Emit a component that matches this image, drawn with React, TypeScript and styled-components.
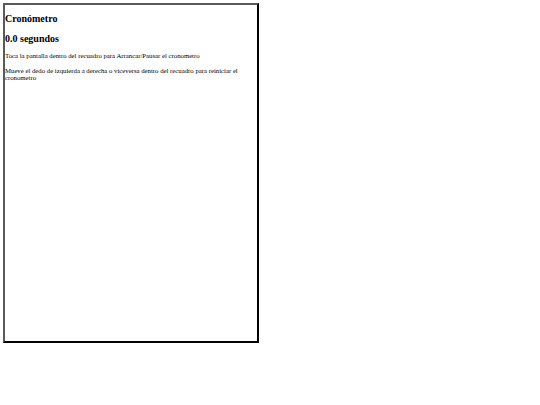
import React from "react";
import styled, { createGlobalStyle } from "styled-components";

const GlobalStyle = createGlobalStyle`
  html, body {
    margin: 0;
    padding: 0;
    background: #ffffff;
  }
  body {
    padding: 3px;
    font-family: "Liberation Serif", "Times New Roman", serif;
    color: #000000;
  }
`;

const Frame = styled.div`
  width: 252px;
  height: 336px;
  border-width: 2px;
  border-style: solid;
  border-color: #5a5a5a #000000 #000000 #5a5a5a;
  overflow: hidden;
`;

const Title = styled.h3`
  margin: 8px 0;
  font-size: 10px;
  font-weight: bold;
  line-height: 1.15;
`;

const Hint = styled.p`
  margin: 6.75px 0;
  font-size: 6.75px;
  line-height: 1.15;
`;

export default function App() {
  return (
    <>
      <GlobalStyle />
      <Frame>
        <Title>Cronómetro</Title>
        <Title>0.0 segundos</Title>
        <Hint>Toca la pantalla dentro del recuadro para Arrancar/Pausar el cronometro</Hint>
        <Hint>
          Mueve el dedo de izquierda a derecha o viceversa dentro del recuadro para reiniciar el cronometro
        </Hint>
      </Frame>
    </>
  );
}
